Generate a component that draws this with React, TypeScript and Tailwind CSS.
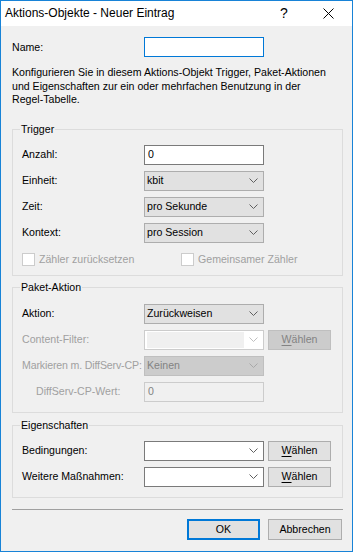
import React from "react";

const Chevron = ({ color = "#606060" }: { color?: string }) => (
  <svg width="9" height="5" viewBox="0 0 9 5" className="shrink-0">
    <path d="M0.5 0.5L4.5 4.5L8.5 0.5" fill="none" stroke={color} strokeWidth="1" />
  </svg>
);

function Group({ title, className, children }: { title: string; className: string; children: React.ReactNode }) {
  return (
    <div className={"relative border border-[#dcdcdc] pl-[9px] " + className}>
      <span className="absolute -top-[7px] left-[7px] bg-[#f0f0f0] px-[1px] leading-[13px]">{title}</span>
      {children}
    </div>
  );
}

function Row({ label, children, disabled, tight }: { label: string; children: React.ReactNode; disabled?: boolean; tight?: boolean }) {
  return (
    <div className="flex h-[20px] items-center">
      <span
        className={
          "w-[122px] shrink-0 whitespace-nowrap " +
          (disabled ? "text-[#a0a0a0] " : "text-black ") +
          (tight ? "tracking-[-0.15px]" : "")
        }
      >
        {label}
      </span>
      {children}
    </div>
  );
}

function Combo({ text }: { text: string }) {
  return (
    <div className="flex h-[20px] w-[120px] items-center justify-between border border-[#adadad] bg-[#e1e1e1] pl-[2px] pr-[5px]">
      <span>{text}</span>
      <Chevron />
    </div>
  );
}

function EditCombo() {
  return (
    <div className="flex h-[20px] w-[120px] items-center justify-end border border-[#7a7a7a] bg-white pr-[5px]">
      <Chevron />
    </div>
  );
}

function Btn({ disabled }: { disabled?: boolean }) {
  return (
    <div
      className={
        "ml-[4px] flex h-[20px] w-[63px] items-center justify-center border " +
        (disabled ? "border-[#bfbfbf] bg-[#cccccc] text-[#838383]" : "border-[#adadad] bg-[#e1e1e1] text-black")
      }
    >
      <span>
        <span className="underline underline-offset-[2px]">W</span>ählen
      </span>
    </div>
  );
}

function Check({ label }: { label: string }) {
  return (
    <div className="flex items-center">
      <div className="h-[13px] w-[13px] border border-[#cccccc] bg-white" />
      <span className="ml-[4px] text-[#a0a0a0]">{label}</span>
    </div>
  );
}

export default function App() {
  return (
    <div className="flex h-[552px] w-[353px] flex-col border border-[#1883d7] bg-[#f0f0f0] font-['Liberation_Sans',Arial,sans-serif] text-[10.6px] leading-[13px] text-black">
      <div className="flex h-[25px] shrink-0 items-center bg-white pl-[4px]">
        <span className="text-[12px]">Aktions-Objekte - Neuer Eintrag</span>
        <span className="ml-auto w-[12px] text-center text-[14px]">?</span>
        <div className="ml-[33px] mr-[18px] flex items-center">
          <svg width="11" height="11" viewBox="0 0 11 11">
            <path d="M0.5 0.5L10.5 10.5M10.5 0.5L0.5 10.5" stroke="#000" strokeWidth="1" />
          </svg>
        </div>
      </div>
      <div className="flex flex-col pl-[11px] pr-[9px] pt-[11px]">
        <div className="flex h-[20px] items-center">
          <span className="w-[132px] shrink-0">Name:</span>
          <div className="h-[20px] w-[120px] border border-[#0078d7] bg-white" />
        </div>
        <p className="mt-[9px] whitespace-nowrap leading-[13.5px]">
          Konfigurieren Sie in diesem Aktions-Objekt Trigger, Paket-Aktionen
          <br />
          und Eigenschaften zur ein oder mehrfachen Benutzung in der
          <br />
          Regel-Tabelle.
        </p>

        <Group title="Trigger" className="mt-[22px] pb-[9px] pt-[15px]">
          <div className="flex flex-col gap-[6px]">
            <Row label="Anzahl:">
              <div className="flex h-[20px] w-[120px] items-center border border-[#7a7a7a] bg-white pl-[3px]">0</div>
            </Row>
            <Row label="Einheit:">
              <Combo text="kbit" />
            </Row>
            <Row label="Zeit:">
              <Combo text="pro Sekunde" />
            </Row>
            <Row label="Kontext:">
              <Combo text="pro Session" />
            </Row>
          </div>
          <div className="mt-[10px] flex h-[13px] items-center">
            <div className="w-[159px]">
              <Check label="Zähler zurücksetzen" />
            </div>
            <Check label="Gemeinsamer Zähler" />
          </div>
        </Group>

        <Group title="Paket-Aktion" className="mt-[11px] pb-[10px] pt-[16px]">
          <div className="flex flex-col gap-[6px]">
            <Row label="Aktion:">
              <Combo text="Zurückweisen" />
            </Row>
            <Row label="Content-Filter:" disabled>
              <div className="flex h-[20px] w-[120px] items-center border border-[#cccccc] bg-white pl-[2px] pr-[5px]">
                <div className="h-[16px] w-[97px] bg-[#f0f0f0]" />
                <div className="ml-auto">
                  <Chevron color="#bfbfbf" />
                </div>
              </div>
              <Btn disabled />
            </Row>
            <Row label="Markieren m. DiffServ-CP:" disabled tight>
              <div className="flex h-[20px] w-[120px] items-center justify-between border border-[#bfbfbf] bg-[#cccccc] pl-[2px] pr-[5px] text-[#838383]">
                <span>Keinen</span>
                <Chevron color="#a8a8a8" />
              </div>
            </Row>
            <div className="flex h-[20px] items-center">
              <span className="w-[122px] shrink-0 pl-[14px] text-[#a0a0a0]">DiffServ-CP-Wert:</span>
              <div className="flex h-[20px] w-[120px] items-center border border-[#cccccc] bg-[#f0f0f0] pl-[3px] text-[#838383]">0</div>
            </div>
          </div>
        </Group>

        <Group title="Eigenschaften" className="mt-[12px] pb-[10px] pt-[15px]">
          <div className="flex flex-col gap-[6px]">
            <Row label="Bedingungen:">
              <EditCombo />
              <Btn />
            </Row>
            <Row label="Weitere Maßnahmen:">
              <EditCombo />
              <Btn />
            </Row>
          </div>
        </Group>

        <div className="mt-[11px] h-px bg-[#a0a0a0]" />

        <div className="mt-[9px] flex justify-end gap-[8px] pr-[1px]">
          <div className="flex h-[21px] w-[73px] items-center justify-center border-2 border-[#0078d7] bg-[#e1e1e1]">OK</div>
          <div className="flex h-[21px] w-[74px] items-center justify-center border border-[#adadad] bg-[#e1e1e1]">Abbrechen</div>
        </div>
      </div>
    </div>
  );
}
